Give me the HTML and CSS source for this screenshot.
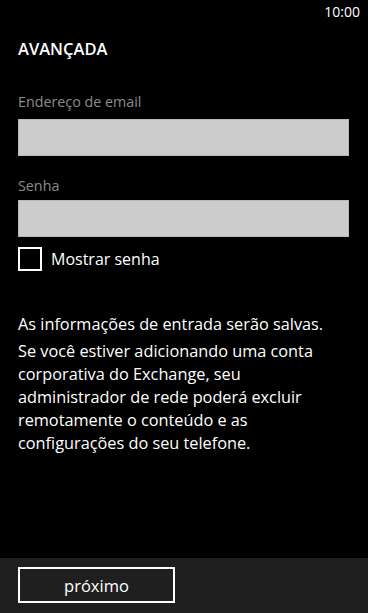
FILE: index.html
```html
<!DOCTYPE html>
<html lang="pt">
  <head>
    <meta charset="UTF-8" />
    <meta name="viewport" content="width=device-width, initial-scale=1.0" />
    <title>Avançada</title>
    <link rel="stylesheet" href="styles.css">
  </head>
  <body>
    <div class="screen">
      <div class="statusBar">10:00</div>
      <div class="content">
        <h3 class="title">AVANÇADA</h3>
        <label class="fieldLabel">Endereço de email</label>
        <div class="textBox"></div>
        <label class="fieldLabel senha">Senha</label>
        <div class="textBox senhaBox"></div>
        <div class="checkRow">
          <span class="checkBox"></span>
          <span class="checkText">Mostrar senha</span>
        </div>
        <p class="info">As informações de entrada serão salvas.</p>
        <p class="info second">Se você estiver adicionando uma conta corporativa do Exchange, seu administrador de rede poderá excluir remotamente o conteúdo e as configurações do seu telefone.</p>
      </div>
      <div class="appBar">
        <button class="nextBtn">próximo</button>
      </div>
    </div>
  </body>
</html>
```

FILE: styles.css
```css
body {
  margin: 0;
  background: #000;
  color: #fff;
  font-family: "Open Sans", "Noto Sans", sans-serif;
}
.screen {
  height: 613px;
  display: flex;
  flex-direction: column;
}
.statusBar {
  height: 24px;
  text-align: right;
  padding-right: 8px;
  font-size: 14px;
  line-height: 24px;
}
.content {
  flex: 1;
  padding: 0 19px 0 18px;
}
.title {
  margin: 13px 0 0;
  font-size: 16.5px;
  font-weight: 600;
  line-height: 24px;
}
.fieldLabel {
  display: block;
  margin-top: 31px;
  color: #8c8c8c;
  font-size: 14.3px;
  line-height: 20px;
}
.senha {
  margin-top: 20px;
}
.textBox {
  margin-top: 7px;
  height: 35px;
  background: #cccccc;
  border: 1px solid #b8b8b8;
}
.senhaBox {
  margin-top: 4px;
}
.checkRow {
  display: flex;
  align-items: center;
  margin-top: 10px;
  height: 24px;
}
.checkBox {
  width: 20px;
  height: 20px;
  border: 2px solid #fff;
}
.checkText {
  margin-left: 9px;
  font-size: 16px;
}
.info {
  margin: 42px 0 0;
  width: 320px;
  font-size: 16.3px;
  line-height: 23px;
}
.second {
  margin-top: 4px;
}
.appBar {
  height: 55px;
  background: #1f1f1f;
  padding: 9px 0 0 18px;
  box-sizing: border-box;
}
.nextBtn {
  width: 157px;
  height: 36px;
  background: transparent;
  border: 2px solid #fff;
  color: #fff;
  font-family: "Open Sans", "Noto Sans", sans-serif;
  font-size: 16.5px;
  padding: 0;
}
```
